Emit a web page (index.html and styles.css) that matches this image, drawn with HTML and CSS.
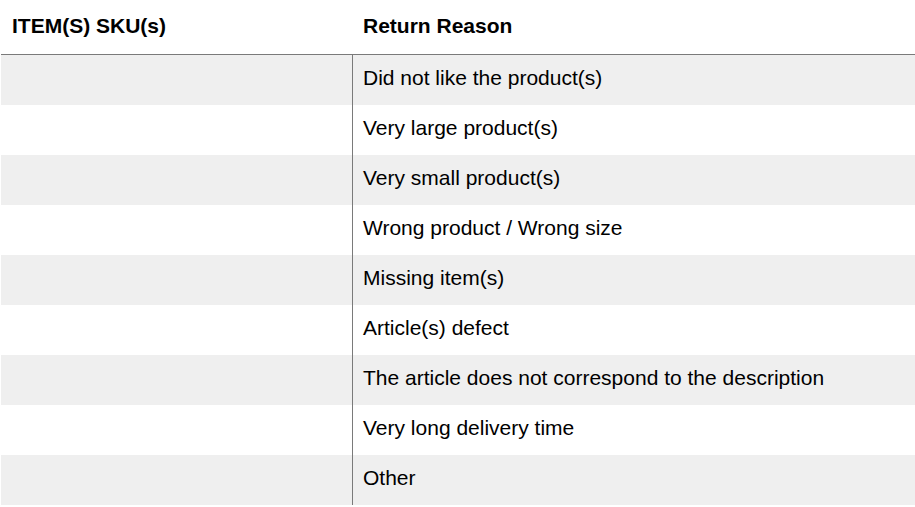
FILE: index.html
```html
<!DOCTYPE html>
<html>
<head>
<meta charset="utf-8">
<link rel="stylesheet" href="styles.css">
</head>
<body>
<div class="table">
  <div class="head">
    <div class="hcell">ITEM(S) SKU(s)</div>
    <div class="hcell hcell-reason">Return Reason</div>
  </div>
  <div class="row alt"><div class="cell"></div><div class="cell reason">Did not like the product(s)</div></div>
  <div class="row"><div class="cell"></div><div class="cell reason">Very large product(s)</div></div>
  <div class="row alt"><div class="cell"></div><div class="cell reason">Very small product(s)</div></div>
  <div class="row"><div class="cell"></div><div class="cell reason">Wrong product / Wrong size</div></div>
  <div class="row alt"><div class="cell"></div><div class="cell reason">Missing item(s)</div></div>
  <div class="row"><div class="cell"></div><div class="cell reason">Article(s) defect</div></div>
  <div class="row alt"><div class="cell"></div><div class="cell reason">The article does not correspond to the description</div></div>
  <div class="row"><div class="cell"></div><div class="cell reason">Very long delivery time</div></div>
  <div class="row alt"><div class="cell"></div><div class="cell reason">Other</div></div>
</div>
</body>
</html>
```

FILE: styles.css
```css
html, body {
  margin: 0;
  padding: 0;
  background: #ffffff;
}
body {
  font-family: "Liberation Sans", Arial, sans-serif;
  font-size: 21px;
  color: #000;
}
.table {
  display: flex;
  flex-direction: column;
  padding-left: 1px;
}
.head, .row {
  display: grid;
  grid-template-columns: 351px 1fr;
}
.head {
  height: 54px;
  border-bottom: 1px solid #7a7a7a;
}
.hcell {
  font-weight: bold;
  line-height: 24px;
  padding: 14px 0 0 11px;
}
.row {
  height: 50px;
}
.row.alt {
  background: #efefef;
}
.cell {
  line-height: 24px;
  padding: 11px 0 0 11px;
}
.cell.reason {
  border-left: 1px solid #7a7a7a;
  padding-left: 10px;
}
```
